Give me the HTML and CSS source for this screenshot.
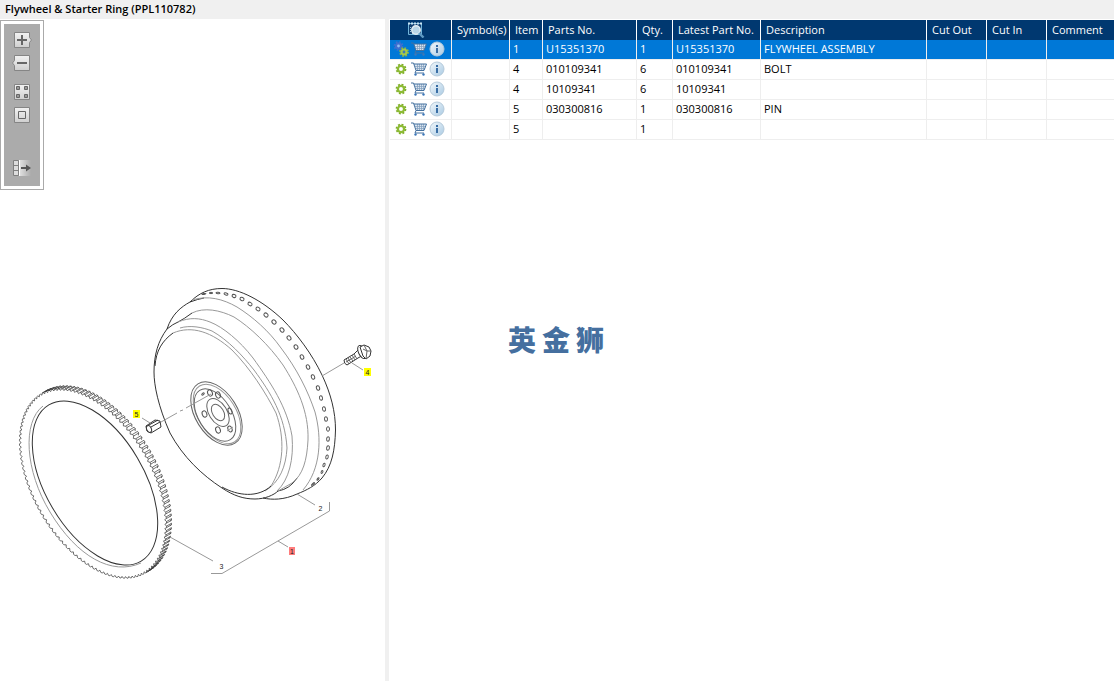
FILE: index.html
```html
<!DOCTYPE html>
<html lang="en">
<head>
<meta charset="utf-8">
<title>Flywheel &amp; Starter Ring</title>
<link rel="stylesheet" href="styles.css">
</head>
<body>
<svg class="sprite" aria-hidden="true">
  <defs>
    <linearGradient id="metal" x1="0" y1="0" x2="0" y2="1"><stop offset="0" stop-color="#f2f2f2"/><stop offset="1" stop-color="#cfcfcf"/></linearGradient>
    <linearGradient id="fade"><stop offset="0" stop-color="#e4e4e4"/><stop offset="1" stop-color="#ababab"/></linearGradient>
    <linearGradient id="glass" x1="0" y1="0" x2="1" y2="1"><stop offset="0" stop-color="#f4f9fc"/><stop offset="1" stop-color="#a9cae3"/></linearGradient>
  </defs>
  <symbol id="gear" viewBox="0 0 16 16">
    <circle cx="8" cy="8" r="4.500" fill="none" stroke="#7fae2b" stroke-width="1.800" stroke-dasharray="1.900 1.630"/>
    <circle cx="8" cy="8" r="3.100" fill="none" stroke="#8dbb35" stroke-width="2.300"/>
  </symbol>
  <symbol id="gears" viewBox="0 0 16 16">
    <circle cx="5.500" cy="5" r="3.900" fill="none" stroke="#3b6fd0" stroke-width="2" stroke-dasharray="1.600 1.460"/>
    <circle cx="5.500" cy="5" r="2.500" fill="#8fbdf0" stroke="#3f6fcf" stroke-width="2.200"/>
    <circle cx="11" cy="11" r="3.900" fill="none" stroke="#8fb63c" stroke-width="2" stroke-dasharray="1.600 1.460"/>
    <circle cx="11" cy="11" r="2.500" fill="#3c79b5" stroke="#a5c84a" stroke-width="2.200"/>
  </symbol>
  <symbol id="cart" viewBox="0 0 16 16">
    <path d="M3 3h12l-2 6H5z" fill="#dbe5ef"/>
    <path d="M4 5.500h10.500M4.500 7.500h9.500M6.500 3v6.500M8.500 3v6.500M10.500 3v6.500M12.500 3v6" fill="none" stroke="#7f9dbd" stroke-width=".7"/>
    <path d="M0 2h2.500L5 9.500h8l2.500-6.500H3M5 9.500l-1 2.500h9" fill="none" stroke="#45719f" stroke-width="1"/>
    <circle cx="4.500" cy="13.500" r="1.200" fill="#3d77b8"/><circle cx="12.500" cy="13.500" r="1.200" fill="#3d77b8"/>
  </symbol>
  <symbol id="info" viewBox="0 0 16 16">
    <circle cx="8" cy="8" r="7" fill="url(#glass)" stroke="#b4cadb"/>
    <path d="M7 4h2v2H7zM7 7h2v5H7z" fill="#3a6ea5"/>
  </symbol>
  <symbol id="lookup" viewBox="0 0 18 16">
    <path d="M1.500 1.500h13v11h-13z" fill="#123f70" stroke="#72b5da"/>
    <path d="M1 1.500h14" stroke="#c7e3f2" stroke-width="2" stroke-dasharray="2 1"/>
    <path d="M3.500 5v6M5 11.500h4" stroke="#9bc9e2" stroke-dasharray="1 1"/>
    <circle cx="9" cy="8" r="4.200" fill="#b9d6e8" stroke="#e2edf3" stroke-width="1.500"/>
    <path d="M12 11l4.500 4.500" stroke="#5f9ac3" stroke-width="2.400"/>
  </symbol>
</svg>

<header class="title-bar"><h1>Flywheel &amp; Starter Ring (PPL110782)</h1></header>
<main class="workspace">
  <section class="drawing-pane" aria-label="Drawing">
    <div class="toolbar">
      <div class="tools">
        <button class="tool" aria-label="Zoom in"><svg viewBox="0 0 20 16"><path d="M2.500.5h15v5l2 2.500-2 2.500v5h-15z" fill="url(#metal)" stroke="#858585"/><path d="M5 8h10M10 3v10" stroke="#666" stroke-width="2"/></svg></button>
        <button class="tool" aria-label="Zoom out"><svg viewBox="0 0 20 16"><path d="M2.500.5h15v15h-15v-5L.5 8l2-2.500z" fill="url(#metal)" stroke="#858585"/><path d="M5 8h10" stroke="#666" stroke-width="2"/></svg></button>
        <button class="tool tool-group" aria-label="Fit to window"><svg viewBox="0 0 20 16"><path d="M2.500.5h15v15h-15z" fill="url(#metal)" stroke="#858585"/><path d="M4.500 2.500h3v3h-3zM12.500 2.500h3v3h-3zM4.500 10.500h3v3h-3zM12.500 10.500h3v3h-3z" fill="#999" stroke="#666"/></svg></button>
        <button class="tool" aria-label="Actual size"><svg viewBox="0 0 20 16"><path d="M2.500.5h15v15h-15z" fill="url(#metal)" stroke="#858585"/><path d="M6.500 4.500h7v7h-7z" fill="none" stroke="#666"/></svg></button>
        <button class="tool tool-last" aria-label="Show list"><svg viewBox="0 0 20 16"><path d="M7 0h12v16H7z" fill="url(#fade)"/><path d="M1.500.5h5v15h-5zM1.500 5.500h5M1.500 10.500h5" fill="#ddd" stroke="#808080"/><path d="M7.500 0v16" stroke="#fff"/><path d="M9 8h7" stroke="#555" stroke-width="2"/><path d="M14 4.500l5 3.500-5 3.500z" fill="#555"/></svg></button>
      </div>
    </div>
    <svg class="drawing" viewBox="0 190 385 491" role="img" aria-label="Exploded view of flywheel and starter ring">
      <g class="ink">
        <path class="teeth" id="ring-teeth"/>
        <ellipse rx="90.700" ry="49.300" transform="translate(95 483) rotate(59.400)"/>
        <path class="soft" d="M43 406C22 422 25 471 50 512C77 557 112 576 141 563"/>

        <path d="M167 329C172 314 181 307 190 302C199 293 209 288.500 222 288.500C239 288.500 262 300 283 320C297 334 312 354 322 375C331 394 335.500 412 335.500 430C335 450 332 466 322 478C315 486 307 490 297 494C284 500 272 500 263 498"/>
        <path d="M167 329C158 341 154 355 154 372C154 385 158 406 170 433C183 457 202 475 222 488C234 496 244 499 255 499C265 499 274 495 278 491Q290 489 297 478"/>
        <path d="M167 329Q173 324 178 322Q184 319 192 313M190 302Q198 299 204 298"/>
        <path class="soft" d="M178 322C190 317 200 318 210 322C223 327 240 341 253 358C271 383 287 407 292 436C294 459 289 480 277 491"/>
        <path class="soft" d="M180 328C190 325 202 327 212 331C228 340 243 356 254 370C271 393 285 416 287 448C286 466 280 482 265 491"/>
        <path class="soft" d="M173 333C192 325 212 332 232 350C250 368 266 393 276 413C285 438 284 466 271 486"/>
        <path d="M271 486C258 498 238 496 222 487M173 333C162 341 156 351 155 366"/>
        <path class="soft" d="M192 313C204 307 220 310 234 317C250 327 269 345 283 365C297 387 309 412 308 440C307 460 303 475 292 483L278 491"/>
        <path class="soft" d="M192 300C208 295 223 299 237 307C253 317 269 331 281 348C297 369 308 391 315 412C322 438 321 469 303 490"/>
        <g id="rim-holes"></g>

        <ellipse class="hub" rx="35" ry="21" transform="translate(216.500 413.500) rotate(58)"/>
        <ellipse class="soft" rx="33" ry="19" transform="translate(217 414) rotate(58)"/>
        <ellipse class="hub" rx="29" ry="16.500" transform="translate(215 415) rotate(58)"/>
        <ellipse class="hub" rx="15.500" ry="9" transform="translate(218 412.500) rotate(58)"/>
        <ellipse class="hub" rx="9" ry="5.500" transform="translate(218 412.500) rotate(58)"/>
        <g id="hub-holes"></g>
        <path class="soft" d="M161 422L177 413M180 411L183 410M186 408L211 394M227 431L233 427"/>

        <path class="solid" d="M146 426L155 420L160 421L161 427L151 433L147 431Z"/>
        <ellipse class="solid" rx="2.300" ry="3.500" transform="translate(149 429) rotate(-25)"/>
        <path d="M149 425L158 420M151 427L160 422"/>

        <path class="solid" d="M344 360L354 354L358 350L362 348L365 354L358 358L347 365Q344 364 344 360Z"/>
        <path class="hub" d="M346 359L349 364M348 358L351 363M350 357L353 361M352 355L355 360M354 354L357 359M346 362L356 356"/>
        <ellipse class="solid" rx="3.500" ry="7" transform="translate(362 352) rotate(-25)"/>
        <path class="solid" d="M360 347L364 345L369 347L371 351L370 356L366 359L363 356Z"/>
        <path class="hub" d="M364 345L367 351L371 351M367 351L366 359M363 349L367 351"/>

        <path class="soft" d="M322 376L344 363M352 363L363 370M142 418L150 423M297 494L315 505M329.500 502V511L222 573.500H211M278 541L288 547M170 537L213 561"/>
      </g>
      <path class="mark" d="M364 368h7v8h-7zM133 410h7v8h-7z"/><path class="mark-selected" d="M289 547h6v8h-6z"/>
      <g class="callouts">
        <text x="367.500" y="374.500">4</text><text x="136.500" y="416.500">5</text><text x="292" y="553.500">1</text><text x="320.500" y="511">2</text><text x="221.500" y="569">3</text>
      </g>
    </svg>
  </section>
  <div class="splitter"></div>
  <section class="parts-pane" aria-label="Parts">
    <table class="parts">
      <colgroup><col class="c-tools"><col class="c-symbol"><col class="c-item"><col class="c-part"><col class="c-qty"><col class="c-latest"><col class="c-desc"><col class="c-cut"><col class="c-cut"><col></colgroup>
      <thead><tr><th class="search"><button class="icon" aria-label="Search"><svg class="lookup"><use href="#lookup"/></svg></button></th><th>Symbol(s)</th><th>Item</th><th>Parts No.</th><th>Qty.</th><th>Latest Part No.</th><th>Description</th><th>Cut Out</th><th>Cut In</th><th>Comment</th></tr></thead>
      <tbody>
        <tr class="selected"><td><div class="actions"><button class="icon" aria-label="Assembly"><svg><use href="#gears"/></svg></button><button class="icon" aria-label="Add to cart"><svg><use href="#cart"/></svg></button><button class="icon" aria-label="Information"><svg><use href="#info"/></svg></button></div></td><td></td><td>1</td><td>U15351370</td><td>1</td><td>U15351370</td><td>FLYWHEEL ASSEMBLY</td><td></td><td></td><td></td></tr>
        <tr><td><div class="actions"><button class="icon" aria-label="Part"><svg><use href="#gear"/></svg></button><button class="icon" aria-label="Add to cart"><svg><use href="#cart"/></svg></button><button class="icon" aria-label="Information"><svg><use href="#info"/></svg></button></div></td><td></td><td>4</td><td>010109341</td><td>6</td><td>010109341</td><td>BOLT</td><td></td><td></td><td></td></tr>
        <tr><td><div class="actions"><button class="icon" aria-label="Part"><svg><use href="#gear"/></svg></button><button class="icon" aria-label="Add to cart"><svg><use href="#cart"/></svg></button><button class="icon" aria-label="Information"><svg><use href="#info"/></svg></button></div></td><td></td><td>4</td><td>10109341</td><td>6</td><td>10109341</td><td></td><td></td><td></td><td></td></tr>
        <tr><td><div class="actions"><button class="icon" aria-label="Part"><svg><use href="#gear"/></svg></button><button class="icon" aria-label="Add to cart"><svg><use href="#cart"/></svg></button><button class="icon" aria-label="Information"><svg><use href="#info"/></svg></button></div></td><td></td><td>5</td><td>030300816</td><td>1</td><td>030300816</td><td>PIN</td><td></td><td></td><td></td></tr>
        <tr><td><div class="actions"><button class="icon" aria-label="Part"><svg><use href="#gear"/></svg></button><button class="icon" aria-label="Add to cart"><svg><use href="#cart"/></svg></button><button class="icon" aria-label="Information"><svg><use href="#info"/></svg></button></div></td><td></td><td>5</td><td></td><td>1</td><td></td><td></td><td></td><td></td><td></td></tr>
      </tbody>
    </table>
    <p class="brand" lang="zh"><span>英</span><span>金</span><span>狮</span></p>
  </section>
</main>
<script src="drawing.js"></script>
</body>
</html>
```
FILE: styles.css
```css
* { box-sizing: border-box; }
body {
  margin: 0;
  min-height: 100vh;
  display: flex;
  flex-direction: column;
  background: #fff;
  color: #000;
  font: 11px/16px "Open Sans", "Noto Sans", sans-serif;
}
.sprite { position: absolute; width: 0; height: 0; }
.title-bar { padding: 1px 5px 2px; background: #f0f0f0; }
.title-bar h1 { margin: 0; font-size: 11px; font-weight: 600; line-height: 16px; }
.workspace { flex: 1; display: grid; grid-template-columns: 385fr 4px 725fr; }
.drawing-pane { min-width: 0; padding-top: 1px; }
.splitter { background: #f0f0f0; }
.parts-pane { min-width: 0; padding: 1px 0 0 1px; }

.toolbar { width: 44px; padding: 3px; border: 1px solid #aaa; background: #fff; }
.tools { display: flex; flex-direction: column; align-items: center; gap: 7px; padding: 8px 0 10px; background: #ababab; }
.tool { display: block; width: 20px; height: 16px; padding: 0; border: 0; background: none; }
.tool svg { display: block; width: 20px; height: 16px; }
.tool-group { margin-top: 6px; }
.tool-last { margin-top: 30px; }

.drawing { display: block; width: 100%; height: auto; }
.ink { fill: none; stroke: #333; stroke-width: 1; }
.ink .soft { stroke: #999; }
.ink .hub { stroke: #666; }
.ink .solid { fill: #fff; }
.ink .teeth { stroke: #333; stroke-width: 0.7; }
.ink .hole { stroke: #555; }
.mark { fill: #ff0; }
.mark-selected { fill: #ff7c7c; }
.callouts { font: 7px "Liberation Sans", sans-serif; text-anchor: middle; fill: #222; }

.parts { width: 100%; table-layout: fixed; border-spacing: 0; }
.parts th, .parts td { height: 20px; text-align: left; white-space: nowrap; border-right: 1px solid #eee; }
.parts th { padding: 0 5px; background: #003870; color: #fff; font-weight: 400; border-right-color: #fff; }
.parts td { padding: 0 3px 2px; border-bottom: 1px solid #eee; }
.parts th:last-child, .parts td:last-child { border-right: 0; }
.parts .selected td { background: #0078d7; color: #fff; }
.c-tools { width: 62px; }
.c-symbol { width: 58px; }
.c-item { width: 33px; }
.c-part { width: 94px; }
.c-qty { width: 36px; }
.c-latest { width: 88px; }
.c-desc { width: 166px; }
.c-cut { width: 60px; }
.parts .search { padding: 0 0 0 17px; }
.actions { display: flex; gap: 2px; }
.icon { display: block; padding: 0; border: 0; background: none; }
.icon svg { display: block; width: 16px; height: 16px; }
.icon .lookup { width: 18px; }

.brand { display: flex; gap: 6px; margin: 179px 0 0 118px; color: #456f9f; font: 900 28px/40px "Noto Sans CJK SC", sans-serif; }
```
FILE: drawing.js
```js
const NS = "http://www.w3.org/2000/svg";

// Point on an ellipse tilted by `deg`, centred at cx, cy.
function point(cx, cy, a, b, deg, t) {
  const r = deg * Math.PI / 180;
  const x = a * Math.cos(t), y = b * Math.sin(t);
  return [cx + x * Math.cos(r) - y * Math.sin(r), cy + x * Math.sin(r) + y * Math.cos(r)];
}
const fmt = p => p[0].toFixed(1) + " " + p[1].toFixed(1);

// Starter ring teeth: front profile all round, side faces where they show.
const count = 118, depth = [5, -3];
let d = "";
const step = 2 * Math.PI / count;
for (let i = 0; i < count; i++) {
  const t = i * step;
  const root = point(93, 483.5, 102, 58.5, 60, t);
  const tip1 = point(93, 483.5, 103.7, 60.2, 60, t + step * 0.35);
  const tip2 = point(93, 483.5, 103.7, 60.2, 60, t + step * 0.7);
  const next = point(93, 483.5, 102, 58.5, 60, t + step);
  d += `M${fmt(root)}L${fmt(tip1)}L${fmt(tip2)}L${fmt(next)}`;
  const r = Math.PI / 3;
  const nx = Math.cos(t) / 104, ny = Math.sin(t) / 60.5;
  const facing = (nx * Math.cos(r) - ny * Math.sin(r)) * depth[0] + (nx * Math.sin(r) + ny * Math.cos(r)) * depth[1];
  if (facing > 0) {
    const back = p => [p[0] + depth[0], p[1] + depth[1]];
    d += `M${fmt(tip1)}L${fmt(back(tip1))}L${fmt(back(tip2))}L${fmt(tip2)}M${fmt(back(tip2))}L${fmt(back(next))}`;
  }
}
document.getElementById("ring-teeth").setAttribute("d", d);

function holes(id, list) {
  const group = document.getElementById(id);
  for (const [x, y, rx, ry, angle] of list) {
    const e = document.createElementNS(NS, "ellipse");
    e.setAttribute("class", "hole");
    e.setAttribute("rx", rx);
    e.setAttribute("ry", ry);
    e.setAttribute("transform", `translate(${x} ${y}) rotate(${angle})`);
    group.append(e);
  }
}
holes("rim-holes", [
  [204, 294, 2, 0.5, -10], [211, 293, 2, 0.6, 0], [218, 293, 2, 0.8, 5], [226, 294, 2, 1.1, 15],
  [234, 296, 2, 1.5, 20], [242, 299, 2.1, 1.6, 25], [250, 304, 2.2, 1.6, 30], [258, 309, 2.2, 1.7, 35],
  [266, 315, 2.3, 1.8, 40], [274, 322, 2.3, 1.8, 45], [282, 330, 2.3, 1.8, 50], [289, 338, 2.3, 1.8, 55],
  [296, 347, 2.3, 1.8, 60], [302, 357, 2.3, 1.7, 65], [308, 367, 2.3, 1.6, 65], [313, 377, 2.3, 1.6, 70],
  [318, 388, 2.3, 1.6, 75], [321, 398, 2.3, 1.5, 80], [324, 409, 2.3, 1.5, 80], [326, 419, 2.3, 1.5, 85],
  [328, 429, 2.3, 1.5, 90], [328, 439, 2.3, 1.4, 95], [328, 448, 2.2, 1.4, 100], [327, 457, 2, 1.2, 105],
  [324, 465, 1.8, 1, 110], [322, 472, 1.5, 0.8, 115], [318, 479, 1.5, 0.7, 125], [313, 484, 2, 0.6, 140]
]);
holes("hub-holes", [
  [204.5, 414, 3.2, 2.3, 70], [218, 430, 3.2, 2.3, 70], [230, 411, 3.2, 1.8, 70], [218, 395, 3.2, 2.3, 65],
  [210, 393, 3.2, 2.3, 65], [230, 429, 3, 2, 65], [203, 394, 1.5, 0.8, -40]
]);
```
